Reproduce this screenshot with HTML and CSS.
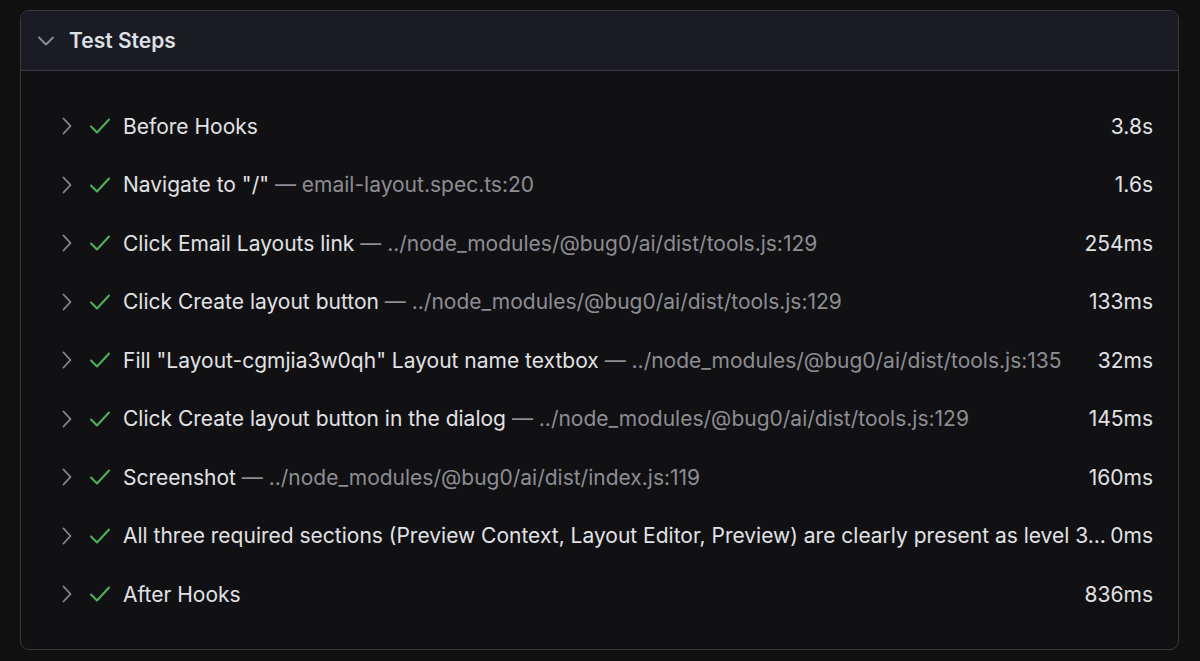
FILE: index.html
```html
<!DOCTYPE html>
<html>
<head>
<meta charset="utf-8">
<link rel="stylesheet" href="styles.css">
</head>
<body>
<div class="card">
  <div class="header">
    <svg class="chev-down" width="18" height="18" viewBox="0 0 18 18"><path d="M2 5.5l7 7 7-7" fill="none" stroke="#8e8e96" stroke-width="1.8" stroke-linecap="round" stroke-linejoin="round"/></svg>
    <span class="title">Test Steps</span>
  </div>
  <div class="body">
    <div class="row"><svg class="chev" width="12" height="18" viewBox="0 0 12 18"><path d="M2.5 1.5l7 7.5-7 7.5" fill="none" stroke="#8a8a90" stroke-width="1.8" stroke-linecap="round" stroke-linejoin="round"/></svg><svg class="check" width="22" height="18" viewBox="0 0 22 18"><path d="M2 9.5l6 6L20 2.5" fill="none" stroke="#4fb35a" stroke-width="2" stroke-linecap="round" stroke-linejoin="round"/></svg><span class="name">Before Hooks</span><span class="dur">3.8s</span></div>
    <div class="row"><svg class="chev" width="12" height="18" viewBox="0 0 12 18"><path d="M2.5 1.5l7 7.5-7 7.5" fill="none" stroke="#8a8a90" stroke-width="1.8" stroke-linecap="round" stroke-linejoin="round"/></svg><svg class="check" width="22" height="18" viewBox="0 0 22 18"><path d="M2 9.5l6 6L20 2.5" fill="none" stroke="#4fb35a" stroke-width="2" stroke-linecap="round" stroke-linejoin="round"/></svg><span class="name">Navigate to "/" <span class="loc">— email-layout.spec.ts:20</span></span><span class="dur">1.6s</span></div>
    <div class="row"><svg class="chev" width="12" height="18" viewBox="0 0 12 18"><path d="M2.5 1.5l7 7.5-7 7.5" fill="none" stroke="#8a8a90" stroke-width="1.8" stroke-linecap="round" stroke-linejoin="round"/></svg><svg class="check" width="22" height="18" viewBox="0 0 22 18"><path d="M2 9.5l6 6L20 2.5" fill="none" stroke="#4fb35a" stroke-width="2" stroke-linecap="round" stroke-linejoin="round"/></svg><span class="name">Click Email Layouts link <span class="loc">— ../node_modules/@bug0/ai/dist/tools.js:129</span></span><span class="dur">254ms</span></div>
    <div class="row"><svg class="chev" width="12" height="18" viewBox="0 0 12 18"><path d="M2.5 1.5l7 7.5-7 7.5" fill="none" stroke="#8a8a90" stroke-width="1.8" stroke-linecap="round" stroke-linejoin="round"/></svg><svg class="check" width="22" height="18" viewBox="0 0 22 18"><path d="M2 9.5l6 6L20 2.5" fill="none" stroke="#4fb35a" stroke-width="2" stroke-linecap="round" stroke-linejoin="round"/></svg><span class="name">Click Create layout button <span class="loc">— ../node_modules/@bug0/ai/dist/tools.js:129</span></span><span class="dur">133ms</span></div>
    <div class="row"><svg class="chev" width="12" height="18" viewBox="0 0 12 18"><path d="M2.5 1.5l7 7.5-7 7.5" fill="none" stroke="#8a8a90" stroke-width="1.8" stroke-linecap="round" stroke-linejoin="round"/></svg><svg class="check" width="22" height="18" viewBox="0 0 22 18"><path d="M2 9.5l6 6L20 2.5" fill="none" stroke="#4fb35a" stroke-width="2" stroke-linecap="round" stroke-linejoin="round"/></svg><span class="name">Fill "Layout-cgmjia3w0qh" Layout name textbox <span class="loc">— ../node_modules/@bug0/ai/dist/tools.js:135</span></span><span class="dur">32ms</span></div>
    <div class="row"><svg class="chev" width="12" height="18" viewBox="0 0 12 18"><path d="M2.5 1.5l7 7.5-7 7.5" fill="none" stroke="#8a8a90" stroke-width="1.8" stroke-linecap="round" stroke-linejoin="round"/></svg><svg class="check" width="22" height="18" viewBox="0 0 22 18"><path d="M2 9.5l6 6L20 2.5" fill="none" stroke="#4fb35a" stroke-width="2" stroke-linecap="round" stroke-linejoin="round"/></svg><span class="name">Click Create layout button in the dialog <span class="loc">— ../node_modules/@bug0/ai/dist/tools.js:129</span></span><span class="dur">145ms</span></div>
    <div class="row"><svg class="chev" width="12" height="18" viewBox="0 0 12 18"><path d="M2.5 1.5l7 7.5-7 7.5" fill="none" stroke="#8a8a90" stroke-width="1.8" stroke-linecap="round" stroke-linejoin="round"/></svg><svg class="check" width="22" height="18" viewBox="0 0 22 18"><path d="M2 9.5l6 6L20 2.5" fill="none" stroke="#4fb35a" stroke-width="2" stroke-linecap="round" stroke-linejoin="round"/></svg><span class="name">Screenshot <span class="loc">— ../node_modules/@bug0/ai/dist/index.js:119</span></span><span class="dur">160ms</span></div>
    <div class="row"><svg class="chev" width="12" height="18" viewBox="0 0 12 18"><path d="M2.5 1.5l7 7.5-7 7.5" fill="none" stroke="#8a8a90" stroke-width="1.8" stroke-linecap="round" stroke-linejoin="round"/></svg><svg class="check" width="22" height="18" viewBox="0 0 22 18"><path d="M2 9.5l6 6L20 2.5" fill="none" stroke="#4fb35a" stroke-width="2" stroke-linecap="round" stroke-linejoin="round"/></svg><span class="name tight">All three required sections (Preview Context, Layout Editor, Preview) are clearly present as level 3...</span><span class="dur">0ms</span></div>
    <div class="row"><svg class="chev" width="12" height="18" viewBox="0 0 12 18"><path d="M2.5 1.5l7 7.5-7 7.5" fill="none" stroke="#8a8a90" stroke-width="1.8" stroke-linecap="round" stroke-linejoin="round"/></svg><svg class="check" width="22" height="18" viewBox="0 0 22 18"><path d="M2 9.5l6 6L20 2.5" fill="none" stroke="#4fb35a" stroke-width="2" stroke-linecap="round" stroke-linejoin="round"/></svg><span class="name">After Hooks</span><span class="dur">836ms</span></div>
  </div>
</div>
</body>
</html>
```
FILE: styles.css
```css
html, body {
  margin: 0;
  padding: 0;
  background: #111112;
}
body {
  padding: 10px 21px 0 20px;
  font-family: Inter, "Noto Sans", sans-serif;
  color: #e2e2e6;
}
.card {
  border: 1.5px solid #3a3a40;
  border-radius: 9px;
  overflow: hidden;
  background: #111113;
}
.header {
  display: flex;
  align-items: center;
  height: 59px;
  padding-left: 16px;
  background: #1a1b23;
  border-bottom: 1.5px solid #3a3a40;
}
.chev-down {
  margin-right: 14px;
}
.title {
  font-size: 21px;
  font-weight: 600;
  color: #dfe0e6;
}
.body {
  padding: 26px 25px 25px 40px;
}
.row {
  display: flex;
  align-items: center;
  height: 58.5px;
  font-size: 21px;
}
.chev {
  flex: none;
  margin-right: 16px;
}
.check {
  flex: none;
  margin-right: 12px;
}
.name {
  flex: 1;
  min-width: 0;
  white-space: nowrap;
  color: #e2e2e6;
}
.loc {
  color: #8d8d93;
}
.dur {
  flex: none;
  margin-left: 6px;
  color: #e2e2e6;
}
```
